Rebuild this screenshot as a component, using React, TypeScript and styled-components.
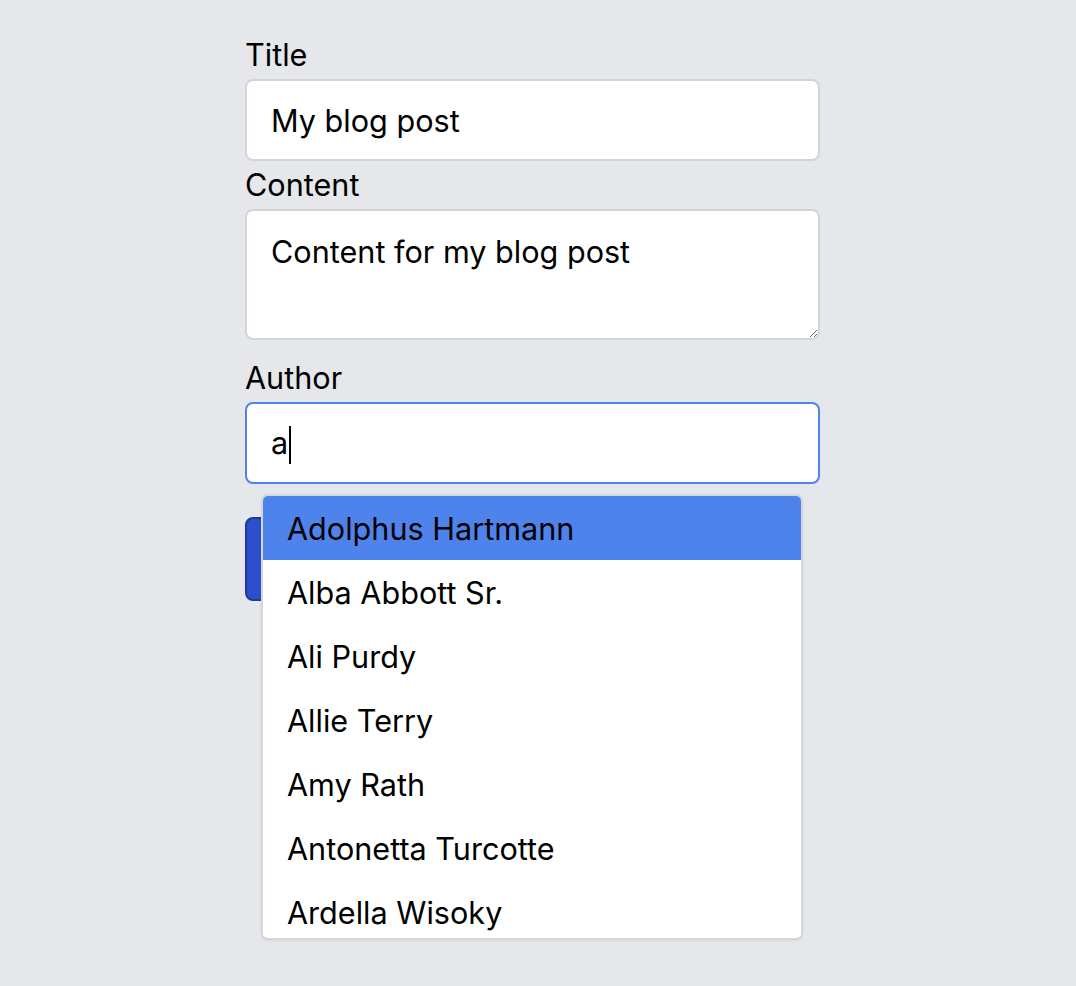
import React from "react";
import styled, { createGlobalStyle } from "styled-components";

const GlobalStyle = createGlobalStyle`
  html, body {
    margin: 0;
    padding: 0;
    background: #e5e7eb;
    font-family: Inter, "Noto Sans", Arial, sans-serif;
    color: #000;
  }
  * { box-sizing: border-box; }
`;

const Page = styled.div`
  min-height: 986px;
  padding: 34px 0 0 245px;
`;

const Form = styled.form`
  width: 575px;
  display: flex;
  flex-direction: column;
`;

const Label = styled.label<{ $spaced?: boolean }>`
  display: block;
  font-size: 30.6px;
  line-height: 42px;
  margin-top: ${(p) => (p.$spaced ? "17px" : "3px")};
  margin-bottom: 3px;
  &:first-child { margin-top: 0; }
`;

const TextInput = styled.input`
  display: block;
  width: 100%;
  height: 82px;
  border: 2px solid #d1d5db;
  border-radius: 8px;
  background: #fff;
  padding: 0 24px;
  font-family: inherit;
  font-size: 30.6px;
  color: #000;
  outline: none;
`;

const TextArea = styled.textarea`
  display: block;
  width: 100%;
  height: 131px;
  border: 2px solid #d1d5db;
  border-radius: 8px;
  background: #fff;
  padding: 20px 24px;
  font-family: inherit;
  font-size: 30.6px;
  line-height: 42px;
  color: #000;
  outline: none;
  resize: vertical;
`;

const FocusedBox = styled.div`
  display: flex;
  align-items: center;
  width: 100%;
  height: 82px;
  border: 2px solid #4f84ee;
  border-radius: 8px;
  background: #fff;
  padding: 0 24px;
  font-size: 30.6px;
  line-height: 42px;
`;

const Caret = styled.span`
  display: inline-block;
  width: 2px;
  height: 38px;
  background: #000;
  margin-left: 1px;
  margin-top: 4px;
`;

const ActionArea = styled.div`
  position: relative;
  padding-top: 33px;
`;

const SubmitButton = styled.button`
  display: block;
  width: 160px;
  height: 84px;
  border: 2px solid #1f3a94;
  border-radius: 8px;
  background: #2c4fcc;
  color: #fff;
  font-family: inherit;
  font-size: 30.6px;
`;

const Dropdown = styled.ul`
  position: absolute;
  top: 10px;
  left: 16px;
  width: 542px;
  height: 446px;
  margin: 0;
  padding: 0;
  list-style: none;
  background: #fff;
  border: 2px solid #d4d6db;
  border-radius: 7px;
  overflow: hidden;
  box-shadow: 0 1px 3px rgba(0, 0, 0, 0.06);
`;

const Option = styled.li<{ $active?: boolean }>`
  height: 64px;
  display: flex;
  align-items: center;
  padding: 0 24px;
  font-size: 30.6px;
  background: ${(p) => (p.$active ? "#4f83ec" : "#fff")};
  color: #000;
`;

const authors = [
  "Adolphus Hartmann",
  "Alba Abbott Sr.",
  "Ali Purdy",
  "Allie Terry",
  "Amy Rath",
  "Antonetta Turcotte",
  "Ardella Wisoky",
];

export default function App() {
  return (
    <>
      <GlobalStyle />
      <Page>
        <Form onSubmit={(e) => e.preventDefault()}>
          <Label htmlFor="title">Title</Label>
          <TextInput id="title" defaultValue="My blog post" />
          <Label htmlFor="content">Content</Label>
          <TextArea id="content" defaultValue="Content for my blog post" />
          <Label $spaced>Author</Label>
          <FocusedBox>
            a<Caret />
          </FocusedBox>
          <ActionArea>
            <SubmitButton type="submit" aria-label="Create" />
            <Dropdown>
              {authors.map((a, i) => (
                <Option key={a} $active={i === 0}>
                  {a}
                </Option>
              ))}
            </Dropdown>
          </ActionArea>
        </Form>
      </Page>
    </>
  );
}
